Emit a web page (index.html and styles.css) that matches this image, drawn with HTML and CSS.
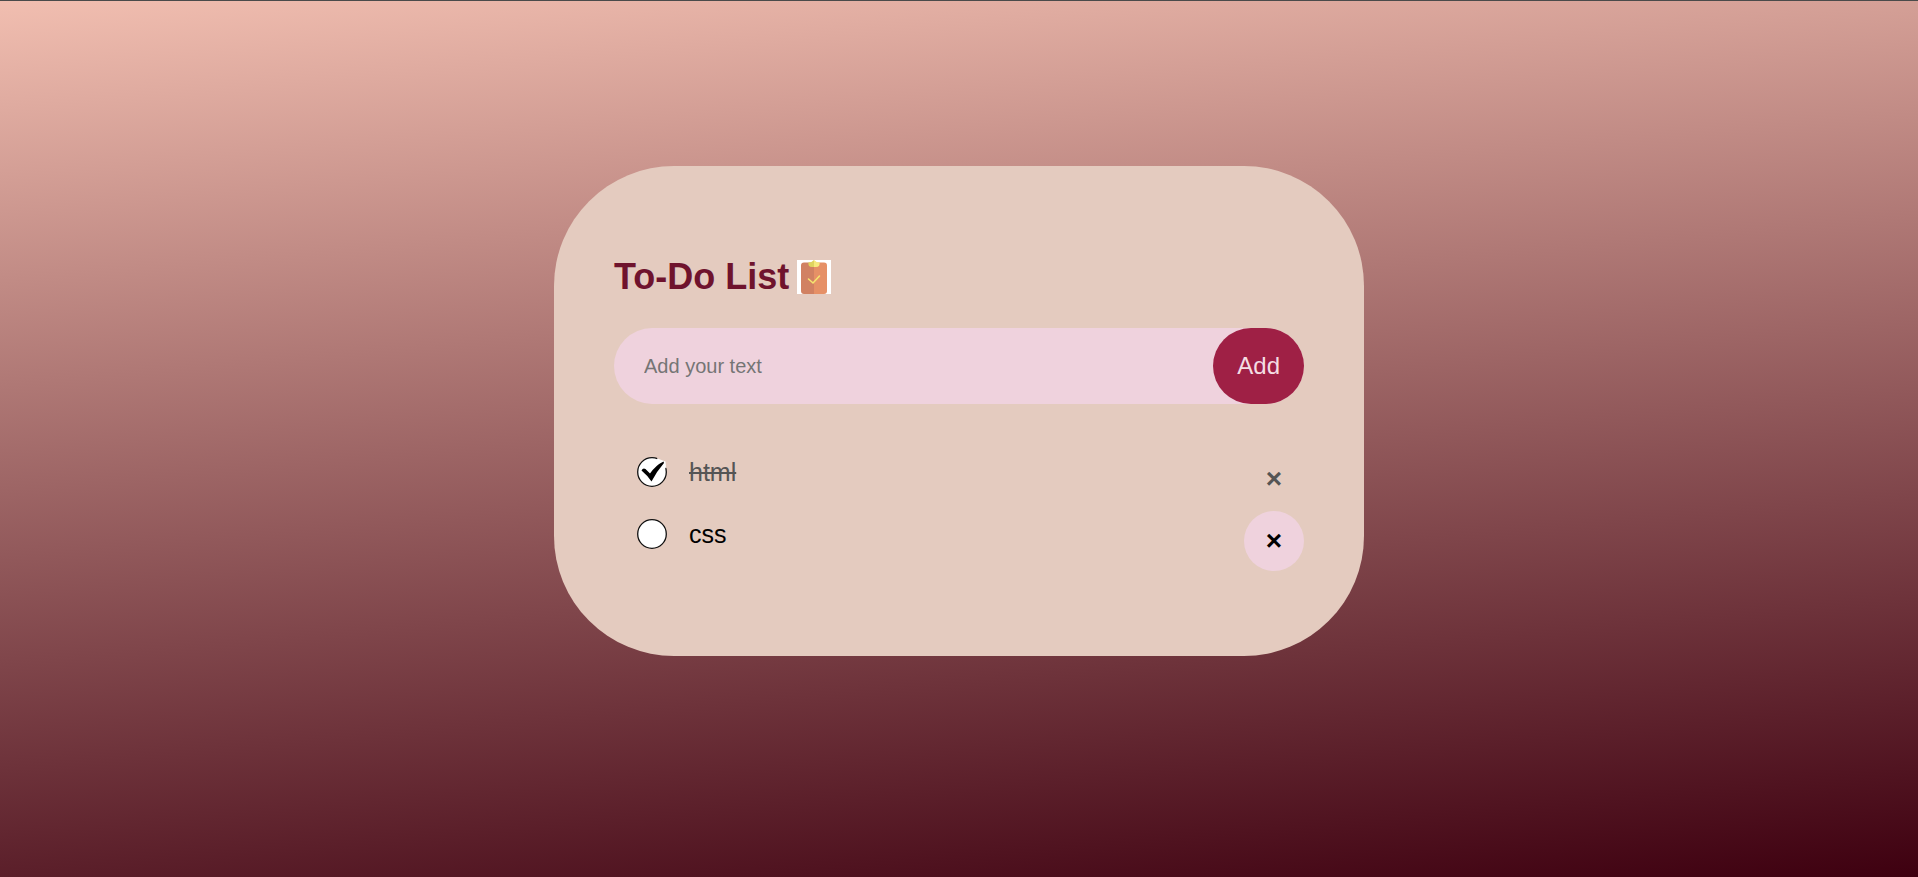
FILE: index.html
```html
<!DOCTYPE html>
<html lang="en">
<head>
<meta charset="utf-8">
<meta name="viewport" content="width=device-width, initial-scale=1">
<title>To-Do List</title>
<link rel="stylesheet" href="styles.css">
</head>
<body>
<main class="page">
  <section class="card">
    <h1 class="title">To-Do List
      <svg class="title-icon" viewBox="0 0 34 34" aria-hidden="true">
        <rect width="34" height="34" fill="#fff"/>
        <path d="M17 2.500H7a3 3 0 0 0-3 3V31a3 3 0 0 0 3 3h10z" fill="#d18162"/>
        <path d="M17 2.500h10a3 3 0 0 1 3 3V31a3 3 0 0 1-3 3H17z" fill="#e69066"/>
        <path d="M17 0L14 2.200H11.500Q10.500 7 15 7H17z" fill="#dfd45f"/>
        <path d="M17 0L20 2.200H22.500Q23.500 7 19 7H17z" fill="#f6ea7d"/>
        <path d="M11.500 19l4.500 4 6.500-7" fill="none" stroke="#f6e56f" stroke-width="1.600" stroke-linecap="round"/>
      </svg>
    </h1>
    <form class="entry">
      <input class="entry-text" type="text" placeholder="Add your text" aria-label="Add your text">
      <button class="entry-add" type="button">Add</button>
    </form>
    <ul class="tasks">
      <li class="task task-done">
        <label class="task-label"><input class="task-check" type="checkbox" checked>
          <svg class="task-mark" viewBox="0 0 30 30" aria-hidden="true">
            <circle cx="15" cy="15" r="14.300" fill="#fff" stroke="#111" stroke-width="1.300"/>
            <path d="M20 0l10 2v9l-3-2-6-5z" fill="#e4cbbf"/>
            <path d="M20.500 1.500l8 3 .5 6-4 4-9-5z" fill="#fff"/>
            <path d="M4.500 13.500q1.500-3 4-1.500l4.500 4.500Q19 8 26.500 4.500l.5 1.500Q20 14 14.500 24.500Q10.500 18.500 4.500 13.500z" fill="#000"/>
          </svg>
          <span class="task-name">html</span></label>
        <button class="task-remove" type="button" aria-label="Remove html">×</button>
      </li>
      <li class="task">
        <label class="task-label"><input class="task-check" type="checkbox">
          <svg class="task-mark" viewBox="0 0 30 30" aria-hidden="true">
            <circle cx="15" cy="15" r="14.300" fill="#fff" stroke="#111" stroke-width="1.300"/>
          </svg>
          <span class="task-name">css</span></label>
        <button class="task-remove task-remove-active" type="button" aria-label="Remove css">×</button>
      </li>
    </ul>
  </section>
</main>
</body>
</html>
```
FILE: styles.css
```css
* {
  box-sizing: border-box;
  margin: 0;
  padding: 0;
  font-family: "Liberation Sans", Arial, sans-serif;
}

.page {
  min-height: 100vh;
  padding: 165px 10px 40px;
  border-top: 1px solid #4a4a4a;
  background: linear-gradient(175deg, #f1beb0, #3e0010);
}

.card {
  max-width: 810px;
  margin: 0 auto;
  padding: 90px 60px 86px;
  border-radius: 120px;
  background: #e4cbbf;
}

.title {
  display: flex;
  align-items: center;
  gap: 8px;
  margin-bottom: 30px;
  color: #6f132d;
  font-size: 36px;
  line-height: 42px;
}

.title-icon {
  width: 34px;
  height: 34px;
}

.entry {
  display: flex;
  margin-bottom: 42px;
  border-radius: 38px;
  background: #efd2dd;
}

.entry-text {
  flex: 1;
  min-width: 0;
  padding: 0 30px;
  border: 0;
  outline: 0;
  background: transparent;
  font-size: 20px;
}

.entry-text::placeholder {
  color: #757575;
}

.entry-add {
  padding: 24px;
  border: 0;
  border-radius: 38px;
  background: #9f2045;
  color: #f4dde3;
  font-size: 24px;
  line-height: 28px;
}

.tasks {
  list-style: none;
}

.task {
  display: flex;
  justify-content: space-between;
  height: 62px;
  color: #000;
  font-size: 25px;
  line-height: 28px;
}

.task-done {
  color: #555;
}

.task-done .task-name {
  text-decoration: line-through;
}

.task-label {
  display: flex;
  flex: 1;
  align-items: center;
  padding-left: 23px;
  height: 52px;
}

.task-check {
  appearance: none;
  width: 0;
  height: 0;
}

.task-mark {
  width: 30px;
  height: 30px;
  margin-right: 22px;
}

.task-remove {
  width: 60px;
  height: 60px;
  margin-top: 3px;
  border: 0;
  border-radius: 50%;
  background: transparent;
  color: inherit;
  font-size: 28px;
  font-weight: bold;
  line-height: 60px;
  text-align: center;
}

.task-remove-active {
  background: #efd2dd;
}
```
